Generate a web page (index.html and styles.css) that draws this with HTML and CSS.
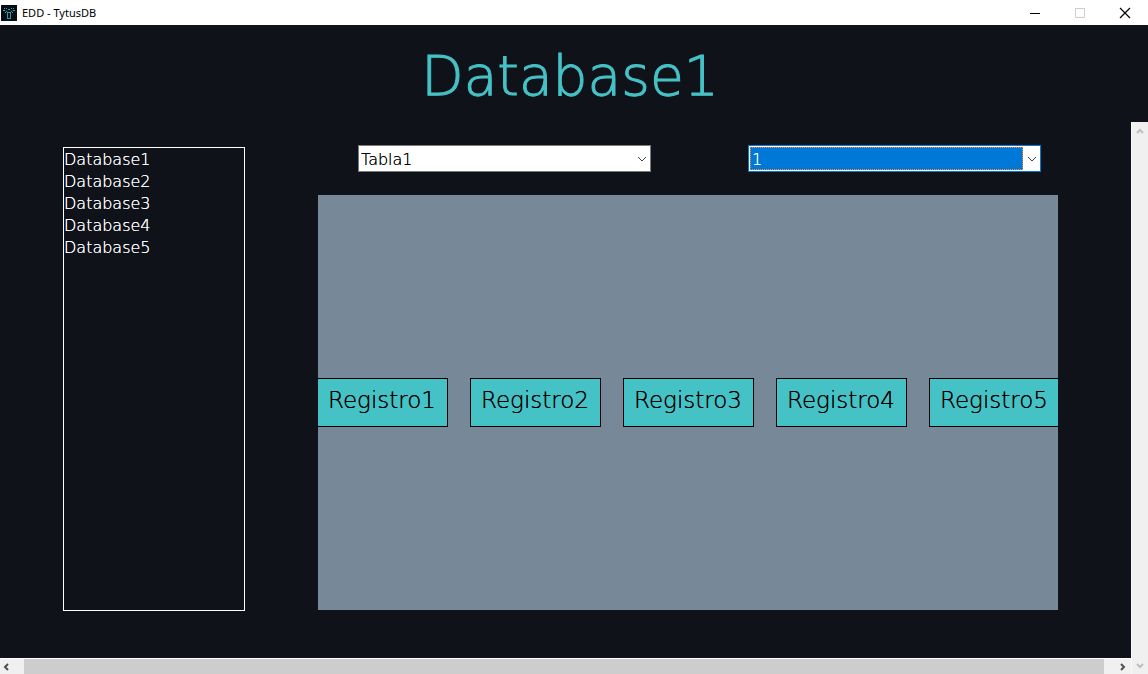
FILE: index.html
```html
<!DOCTYPE html>
<html lang="es">
<head>
<meta charset="utf-8">
<meta name="viewport" content="width=device-width, initial-scale=1">
<title>EDD - TytusDB</title>
<link rel="stylesheet" href="styles.css">
</head>
<body>
<header class="titlebar">
  <svg class="app-icon" viewBox="0 0 16 16" aria-hidden="true">
    <rect width="16" height="16" fill="#060d14"/>
    <path d="M6.500 7v6M9.500 7v6M6 13.500h4M6 7.500h4M5 5.500l1.500 2M11 5.500l-1.500 2" fill="none" stroke="#1f9fa3"/>
    <path d="M3 3h1v1h-1zM5 3h1v1h-1zM7 4h2v1h-2zM10 3h1v1h-1zM12 3h1v1h-1zM2 5h2v1h-2zM12 5h2v1h-2zM4 7h1v1h-1zM11 7h1v1h-1z" fill="#2aa5a8"/>
  </svg>
  <span class="app-name">EDD - TytusDB</span>
  <div class="window-buttons">
    <button type="button" aria-label="Minimizar"><svg viewBox="0 0 12 12"><path d="M1 6.500h10" stroke="#000"/></svg></button>
    <button type="button" aria-label="Maximizar" disabled><svg viewBox="0 0 12 12"><path d="M1.500 1.500h9v9h-9z" stroke="#ccc"/></svg></button>
    <button type="button" aria-label="Cerrar"><svg viewBox="0 0 12 12"><path d="M1 1l10 10M11 1l-10 10" stroke="#000" stroke-width="1.200"/></svg></button>
  </div>
</header>
<h1 class="title">Database1</h1>
<div class="viewport">
  <main class="content">
    <ul class="database-list">
      <li>Database1</li>
      <li>Database2</li>
      <li>Database3</li>
      <li>Database4</li>
      <li>Database5</li>
    </ul>
    <section class="viewer">
      <div class="pickers">
        <div class="picker">
          <select aria-label="Tabla"><option>Tabla1</option></select>
          <svg class="chevron" viewBox="0 0 10 6"><path d="M1 1l4 4l4-4"/></svg>
        </div>
        <div class="picker picker-active">
          <select aria-label="Registro"><option>1</option></select>
          <svg class="chevron" viewBox="0 0 10 6"><path d="M1 1l4 4l4-4"/></svg>
        </div>
      </div>
      <div class="canvas">
        <div class="record">Registro1</div>
        <div class="record">Registro2</div>
        <div class="record">Registro3</div>
        <div class="record">Registro4</div>
        <div class="record">Registro5</div>
      </div>
    </section>
  </main>
  <div class="scroll-x">
    <button type="button" aria-label="Izquierda"><svg viewBox="0 0 8 8"><path d="M6 1l-3 3l3 3"/></svg></button>
    <div class="thumb"></div>
    <button type="button" aria-label="Derecha"><svg viewBox="0 0 8 8"><path d="M2 1l3 3l-3 3"/></svg></button>
  </div>
  <div class="scroll-y">
    <button type="button" aria-label="Arriba" disabled><svg viewBox="0 0 8 8"><path d="M1 6l3-3l3 3"/></svg></button>
    <button type="button" aria-label="Abajo" disabled><svg viewBox="0 0 8 8"><path d="M1 2l3 3l3-3"/></svg></button>
  </div>
</div>
</body>
</html>
```
FILE: styles.css
```css
* { box-sizing: border-box; }

body {
  margin: 0;
  min-height: 100vh;
  display: flex;
  flex-direction: column;
  background: #0f1219;
  color: #fff;
  font-family: "Century Gothic", "DejaVu Sans Light", "DejaVu Sans ExtraLight", "DejaVu Sans", sans-serif;
  font-weight: 200;
  font-size: 16px;
}

button {
  border: 0;
  padding: 0;
  background: none;
  display: flex;
  align-items: center;
  justify-content: center;
}

.titlebar {
  height: 25px;
  display: flex;
  align-items: center;
  gap: 5px;
  padding: 0 1px;
  background: #fff;
  color: #000;
}

.app-icon { width: 16px; height: 16px; }

.app-name {
  font: 400 11px "Segoe UI", "Noto Sans", sans-serif;
}

.window-buttons { display: flex; margin-left: auto; }
.window-buttons button { width: 45px; height: 24px; }
.window-buttons svg { width: 12px; height: 12px; fill: none; }

.title {
  margin: 0;
  height: 97px;
  padding-right: 8px;
  line-height: 102px;
  text-align: center;
  font-size: 55px;
  font-weight: 200;
  color: #45c2c6;
  -webkit-text-stroke: 1px #45c2c6;
}

.viewport {
  flex: 1;
  display: grid;
  grid-template-columns: minmax(0, 1fr) 17px;
  grid-template-rows: 1fr 16px;
}

.content {
  display: flex;
  gap: 73px;
  padding: 23px 73px 47px 63px;
}

.database-list {
  flex: none;
  width: 182px;
  margin: 2px 0 0;
  padding: 1px 0 0;
  border: 1px solid #fff;
  list-style: none;
  line-height: 22px;
  text-shadow: 0 0 currentColor;
}

.viewer {
  flex: 1;
  min-width: 0;
  display: flex;
  flex-direction: column;
  gap: 23px;
  padding-bottom: 1px;
}

.pickers {
  display: flex;
  justify-content: space-between;
  padding: 0 17px 0 40px;
}

.picker {
  position: relative;
  width: 293px;
  height: 27px;
  padding: 1px;
  border: 1px solid #7a7a7a;
  background: #fff;
}

.picker select {
  appearance: none;
  display: block;
  width: 273px;
  height: 23px;
  padding: 1px 1px 0;
  border: 0;
  background: #fff;
  color: #000;
  font: inherit;
  text-shadow: 0 0 currentColor;
}

.picker-active { border-color: #0078d7; }

.picker-active select {
  border: 1px dotted #ff8728;
  background: #0078d7;
  color: #fff;
}

.chevron {
  position: absolute;
  right: 3px;
  top: 10px;
  width: 10px;
  height: 6px;
  fill: none;
  stroke: #444;
  pointer-events: none;
}

.canvas {
  flex: 1;
  display: flex;
  align-items: center;
  justify-content: center;
  gap: 22px;
  overflow: hidden;
  background: #778898;
}

.record {
  flex: none;
  width: 131px;
  height: 49px;
  border: 1px solid #000;
  background: #45c2c6;
  color: #000;
  line-height: 43px;
  text-align: center;
  font-size: 23px;
  text-shadow: 0 0 currentColor;
}

.scroll-x {
  display: flex;
  border-top: 1px solid #fff;
  background: #f0f0f0;
}

.scroll-x button { width: 24px; padding-right: 12px; }
.scroll-x button:last-child { width: 27px; padding: 0 0 0 10px; }

.thumb { flex: 1; background: #cdcdcd; }

.scroll-y {
  grid-column: 2;
  grid-row: 1 / 3;
  display: flex;
  flex-direction: column;
  justify-content: space-between;
  border-left: 1px solid #f8f8f8;
  background: #f0f0f0;
}

.scroll-y button { height: 17px; }

.scroll-x svg,
.scroll-y svg {
  width: 8px;
  height: 8px;
  fill: none;
  stroke: #505050;
  stroke-width: 2;
}

.scroll-y svg { stroke: #bfbfbf; }
```
